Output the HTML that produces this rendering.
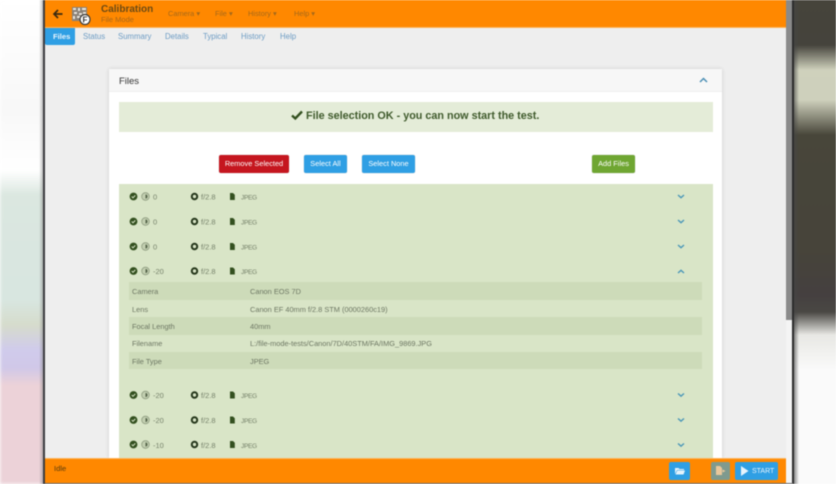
<!DOCTYPE html>
<html><head><meta charset="utf-8"><style>
html,body{margin:0;padding:0;width:836px;height:484px;overflow:hidden;background:#fff}
body{position:relative;font-family:"Liberation Sans",sans-serif}
#w{position:absolute;left:0;top:0;width:836px;height:484px;filter:blur(.4px)}
.a,.a *{box-sizing:border-box}
.a{position:absolute}
.t{position:absolute;white-space:nowrap;line-height:1}
.btn{position:absolute;border-radius:2px;color:#fff;font-size:7.4px;text-align:center;line-height:18.5px;height:18px;top:155px;box-shadow:0 0 1px rgba(0,0,0,.3)}
.row{position:absolute;left:119px;width:594px;height:25px;background:#d9e5c7;border-bottom:1px solid #eaf1df}
.c{font-size:7.4px;color:#6d7763}
.j{font-size:6.6px;letter-spacing:-.35px}
svg{position:absolute;overflow:visible}
</style></head><body><div id="w">
<div class="a" style="left:0;top:0;width:44px;height:484px;filter:blur(1.5px);background:linear-gradient(180deg,#fff 0,#f8f8f8 110px,#fff 170px,#dbe7e0 195px,#d8e6e0 300px,#d6dccc 325px,#d0cbec 350px,#d0c8e8 368px,#ecd2d8 385px,#ecd2d8 484px)"></div>
<div class="a" style="left:39px;top:0;width:5px;height:484px;background:linear-gradient(90deg,rgba(120,120,120,0),rgba(110,110,110,.55))"></div>
<div class="a" style="left:793px;top:0;width:43px;height:484px;background:linear-gradient(180deg,#46443b 0,#45433c 45px,#cfd1bc 70px,#ced0bc 100px,#48463a 135px,#47443a 250px,#454040 295px,#4a4844 312px,#e8e8e4 335px,#fafafa 370px,#fafafa 484px)"></div>
<div class="a" style="left:793px;top:0;width:6px;height:484px;background:linear-gradient(90deg,rgba(70,70,70,.75),rgba(70,70,70,0))"></div>
<div class="a" style="left:43px;top:0;width:2px;height:484px;background:#3c3c40"></div>
<div class="a" style="left:792px;top:0;width:1.5px;height:484px;background:#2d2d2d"></div>
<div class="a" style="left:45px;top:0;width:747px;height:484px;background:#eeeeee"></div>
<div class="a" style="left:786px;top:0;width:6px;height:320px;background:#8a8a8a"></div>
<div class="a" style="left:786px;top:320px;width:6px;height:164px;background:#f4f4f4"></div>

<div class="a" style="left:45px;top:0;width:741px;height:28px;background:#ff8800;border-bottom:1px solid #fdb45c"></div>
<svg style="left:53px;top:9px" width="10" height="10" viewBox="0 0 10 10"><path d="M5 1L1 5l4 4M1.5 5H9.5" fill="none" stroke="#3a2a10" stroke-width="1.7"/></svg>
<svg style="left:72px;top:6px" width="19" height="19" viewBox="0 0 19 19">
<rect x="0" y="1" width="15" height="14" fill="#8a8278"/>
<path d="M1 2h3v2H1zM6 2h2v3H6zM10 2h4v2h-4zM2 6h3v2H2zM7 7h3v2H7zM11 6h3v3h-3zM1 10h2v3H1zM5 10h3v2H5zM9 11h2v3H9z" fill="#e8e4dc"/>
<circle cx="13" cy="13.5" r="5" fill="#fff" stroke="#3a3a3a" stroke-width="1.2"/>
<text x="13" y="16.5" font-size="8" font-weight="700" text-anchor="middle" font-family="Liberation Sans" fill="#333">F</text></svg>
<div class="t" style="left:101px;top:5px;font-size:10px;font-weight:700;color:#6b4a14">Calibration</div>
<div class="t" style="left:101px;top:16px;font-size:7.5px;color:#a8681a">File Mode</div>
<div class="t" style="left:168px;top:10px;font-size:7.4px;color:#a5691a">Camera ▾</div>
<div class="t" style="left:215px;top:10px;font-size:7.4px;color:#a5691a">File ▾</div>
<div class="t" style="left:248px;top:10px;font-size:7.4px;color:#a5691a">History ▾</div>
<div class="t" style="left:294px;top:10px;font-size:7.4px;color:#a5691a">Help ▾</div>

<div class="a" style="left:45px;top:28px;width:30px;height:17px;background:#2f9fe4;border-radius:0 0 2px 2px"></div>
<div class="t" style="left:53px;top:33px;font-size:7.6px;font-weight:700;color:#eaf5fd">Files</div>
<div class="t" style="left:83px;top:33px;font-size:7.8px;color:#6d9cc4">Status</div>
<div class="t" style="left:118px;top:33px;font-size:7.8px;color:#6d9cc4">Summary</div>
<div class="t" style="left:165px;top:33px;font-size:7.8px;color:#6d9cc4">Details</div>
<div class="t" style="left:203px;top:33px;font-size:7.8px;color:#6d9cc4">Typical</div>
<div class="t" style="left:241px;top:33px;font-size:7.8px;color:#6d9cc4">History</div>
<div class="t" style="left:280px;top:33px;font-size:7.8px;color:#6d9cc4">Help</div>

<div class="a" style="left:109px;top:69px;width:613px;height:389px;background:#fff;box-shadow:0 0 4px rgba(0,0,0,.14)"></div>
<div class="a" style="left:109px;top:69px;width:613px;height:23px;background:#f7f7f7;border-bottom:1px solid #efefef"></div>
<div class="t" style="left:119px;top:77px;font-size:9.5px;color:#333">Files</div>
<svg style="left:699px;top:77px" width="9" height="6" viewBox="0 0 9 6"><path d="M1 5L4.5 1.5 8 5" fill="none" stroke="#4c8fb5" stroke-width="1.5"/></svg>

<div class="a" style="left:119px;top:102px;width:594px;height:30px;background:#e4ecd8"></div>
<svg style="left:291px;top:110px" width="12" height="10" viewBox="0 0 12 10"><path d="M1 5.5L4.3 8.5 11 1.5" fill="none" stroke="#33501f" stroke-width="2.4"/></svg>
<div class="t" style="left:306px;top:110.5px;font-size:10.8px;font-weight:700;color:#3f5a2c">File selection OK - you can now start the test.</div>

<div class="btn" style="left:219px;width:70px;background:#c5161f">Remove Selected</div>
<div class="btn" style="left:304px;width:43px;background:#2f9fe4">Select All</div>
<div class="btn" style="left:362px;width:53px;background:#2f9fe4">Select None</div>
<div class="btn" style="left:592px;width:43px;background:#6fa632">Add Files</div>

<div class="row" style="top:184px"></div>
<div class="row" style="top:209px"></div>
<div class="row" style="top:234px"></div>
<div class="row" style="top:259px;height:124px"></div>
<div class="row" style="top:383px"></div>
<div class="row" style="top:408px"></div>
<div class="row" style="top:433px"></div>

<div class="a" style="left:129px;top:282px;width:573px;height:18px;background:#cddbb9"></div>
<div class="a" style="left:129px;top:317px;width:573px;height:18px;background:#cddbb9"></div>
<div class="a" style="left:129px;top:352px;width:573px;height:17px;background:#cddbb9"></div>

<div class="t c" style="left:132px;top:288px">Camera</div>
<div class="t c" style="left:250px;top:288px">Canon EOS 7D</div>
<div class="t c" style="left:132px;top:306px">Lens</div>
<div class="t c" style="left:250px;top:306px">Canon EF 40mm f/2.8 STM (0000260c19)</div>
<div class="t c" style="left:132px;top:323px">Focal Length</div>
<div class="t c" style="left:250px;top:323px">40mm</div>
<div class="t c" style="left:132px;top:340px">Filename</div>
<div class="t c" style="left:250px;top:340px">L:/file-mode-tests/Canon/7D/40STM/FA/IMG_9869.JPG</div>
<div class="t c" style="left:132px;top:358px">File Type</div>
<div class="t c" style="left:250px;top:358px">JPEG</div>

<svg style="left:0;top:0" width="836" height="484" viewBox="0 0 836 484">
<defs>
<g id="ok"><circle cx="133.5" cy="0" r="3.9" fill="#33501f"/><path d="M131.700 0l1.300 1.300 2.300-2.400" fill="none" stroke="#d9e5c7" stroke-width="1"/></g>
<g id="ev"><circle cx="145.5" cy="0" r="3.8" fill="#c2cfb0" stroke="#8f9c80" stroke-width=".8"/><path d="M145.500-2a2 2 0 0 1 0 4z" fill="#55644a"/></g>
<g id="ap"><circle cx="194.5" cy="0" r="2.700" fill="none" stroke="#24361a" stroke-width="2"/></g>
<g id="fi"><path d="M230-3.500h3l1.800 1.800v5.200H230z" fill="#33501f"/></g>
<g id="dn"><path d="M678-1.500l3 2.700 3-2.700" fill="none" stroke="#4c98b8" stroke-width="1.400"/></g>
<g id="r"><use href="#ok"/><use href="#ev"/><use href="#ap"/><use href="#fi"/></g>
</defs>
<use href="#r" y="196.5"/><use href="#dn" y="196.5"/>
<use href="#r" y="221.5"/><use href="#dn" y="221.5"/>
<use href="#r" y="246.5"/><use href="#dn" y="246.5"/>
<use href="#r" y="271"/><path d="M678 273l3-2.700 3 2.700" fill="none" stroke="#4c98b8" stroke-width="1.400"/>
<use href="#r" y="395"/><use href="#dn" y="395"/>
<use href="#r" y="420"/><use href="#dn" y="420"/>
<use href="#r" y="444.5"/><use href="#dn" y="445"/>
<g font-family="Liberation Sans" font-size="7.5" fill="#76826a">
<text x="153" y="199.5">0</text><text x="201" y="199.5">f/2.8</text><text x="241" y="199.5" class="j">JPEG</text>
<text x="153" y="224.5">0</text><text x="201" y="224.5">f/2.8</text><text x="241" y="224.5" class="j">JPEG</text>
<text x="153" y="249.5">0</text><text x="201" y="249.5">f/2.8</text><text x="241" y="249.5" class="j">JPEG</text>
<text x="153" y="274">-20</text><text x="201" y="274">f/2.8</text><text x="241" y="274" class="j">JPEG</text>
<text x="153" y="398">-20</text><text x="201" y="398">f/2.8</text><text x="241" y="398" class="j">JPEG</text>
<text x="153" y="423">-20</text><text x="201" y="423">f/2.8</text><text x="241" y="423" class="j">JPEG</text>
<text x="153" y="448">-10</text><text x="201" y="448">f/2.8</text><text x="241" y="448" class="j">JPEG</text>
</g>
</svg>

<div class="a" style="left:45px;top:458px;width:741px;height:25px;background:#ff8800;border-top:1px solid #fdb45c"></div>
<div class="a" style="left:45px;top:483px;width:748px;height:1px;background:#6a6a6a"></div>
<div class="t" style="left:54px;top:465px;font-size:7.6px;color:#5a3c0c">Idle</div>
<div class="a" style="left:669px;top:462px;width:21px;height:18px;background:#2f9fe4;border-radius:2px"></div>
<svg style="left:675px;top:467px" width="10" height="8" viewBox="0 0 10 8"><path d="M0 1h3.500l1 1H9v1H2L0 7zM2.300 3.500H10L8.500 7.500H.5z" fill="#e6f3fc"/></svg>
<div class="a" style="left:711px;top:462px;width:19px;height:18px;background:#7f9a8e;border-radius:2px"></div>
<svg style="left:716px;top:466px" width="10" height="10" viewBox="0 0 10 10"><path d="M0 0h4l2 2v7H0z" fill="#e9c79a"/><path d="M6.500 3.500L9.500 5 6.500 6.500z" fill="#e9c79a"/></svg>
<div class="a" style="left:735px;top:462px;width:43px;height:18px;background:#2f9fe4;border-radius:2px"></div>
<svg style="left:741px;top:466px" width="8" height="10" viewBox="0 0 8 10"><path d="M0 0l7.500 5L0 10z" fill="#e6f3fc"/></svg>
<div class="t" style="left:752px;top:468px;font-size:7px;color:#e6f3fc">START</div>
</div></body></html>
